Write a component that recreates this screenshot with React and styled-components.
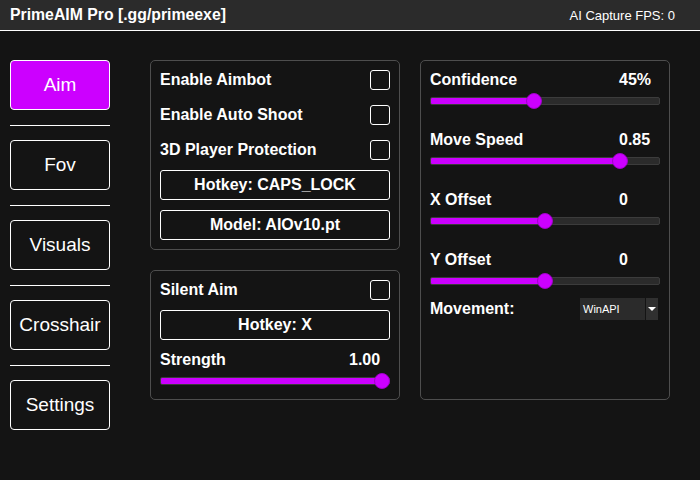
import React from "react";
import styled, { createGlobalStyle } from "styled-components";

const ACCENT = "#cc00ff";

const GlobalStyle = createGlobalStyle`
  html, body { margin: 0; padding: 0; background: #141414; }
  body { font-family: "Liberation Sans", Arial, sans-serif; color: #ffffff; }
  * { box-sizing: border-box; }
`;

const Page = styled.div`
  width: 700px;
  height: 480px;
  background: #141414;
  overflow: hidden;
`;

const Header = styled.header`
  height: 31px;
  background: #2b2b2b;
  border-bottom: 1px solid #ffffff;
  display: flex;
  align-items: center;
  justify-content: space-between;
  padding: 0 25px 0 10px;
`;

const Title = styled.div`
  font-size: 15.8px;
  font-weight: bold;
  color: #ffffff;
`;

const Fps = styled.div`
  font-size: 13px;
  color: #ffffff;
`;

const Main = styled.main`
  display: flex;
  align-items: flex-start;
  padding: 29px 0 0 10px;
`;

const Sidebar = styled.nav`
  width: 100px;
  display: flex;
  flex-direction: column;
`;

const NavButton = styled.div`
  height: 50px;
  border: 1px solid #ffffff;
  border-radius: 4px;
  background: ${(p) => (p.$active ? ACCENT : "transparent")};
  display: flex;
  align-items: center;
  justify-content: center;
  font-size: 19px;
  color: #ffffff;
`;

const Separator = styled.div`
  height: 1px;
  background: #ffffff;
  margin: 15px 0 14px;
`;

const Column = styled.div`
  width: 250px;
  margin-left: ${(p) => p.$ml}px;
  display: flex;
  flex-direction: column;
  gap: 20px;
`;

const Panel = styled.section`
  height: ${(p) => p.$h}px;
  border: 1px solid #4e4e4e;
  border-radius: 5px;
  padding: 9px;
  display: flex;
  flex-direction: column;
  gap: 10px;
`;

const CheckList = styled.div`
  display: flex;
  flex-direction: column;
  gap: 15px;
`;

const CheckRow = styled.div`
  height: 20px;
  display: flex;
  align-items: center;
  justify-content: space-between;
`;

const Label = styled.span`
  font-size: 16px;
  font-weight: bold;
  color: #ffffff;
  white-space: nowrap;
`;

const Checkbox = styled.div`
  width: 20px;
  height: 20px;
  border: 1px solid #ffffff;
  border-radius: 3px;
`;

const OutlineButton = styled.div`
  height: 30px;
  border: 1px solid #ffffff;
  border-radius: 3px;
  display: flex;
  align-items: center;
  justify-content: center;
  font-size: 16px;
  font-weight: bold;
  color: #ffffff;
`;

const SliderList = styled.div`
  display: flex;
  flex-direction: column;
  gap: 22px;
`;

const SliderGroup = styled.div`
  display: flex;
  flex-direction: column;
  gap: 4px;
`;

const LabelRow = styled.div`
  height: 20px;
  display: grid;
  grid-template-columns: 189px 1fr;
  align-items: center;
`;

const TrackArea = styled.div`
  position: relative;
  height: 14px;
  display: flex;
  align-items: center;
`;

const Track = styled.div`
  width: 100%;
  height: 8px;
  background: #2b2b2b;
  border: 1px solid #3c3c3c;
  border-radius: 2px;
  overflow: hidden;
`;

const Fill = styled.div`
  height: 100%;
  background: ${ACCENT};
`;

const Thumb = styled.div`
  position: absolute;
  top: -1px;
  width: 16px;
  height: 16px;
  border-radius: 50%;
  background: ${ACCENT};
  border: 1px solid #a000c8;
`;

const MoveRow = styled.div`
  height: 22px;
  display: flex;
  align-items: center;
  justify-content: space-between;
  padding-right: 2px;
`;

const Select = styled.div`
  width: 78px;
  height: 22px;
  display: flex;
  gap: 1px;
`;

const SelectValue = styled.div`
  flex: 1;
  background: #2b2b2b;
  font-size: 11px;
  color: #ffffff;
  display: flex;
  align-items: center;
  padding-left: 3px;
`;

const SelectArrow = styled.div`
  width: 12px;
  background: #303030;
  display: flex;
  align-items: center;
  justify-content: center;
`;

const TRACK_W = 230;
const THUMB = 16;

function Slider({ label, value, pos }) {
  const left = pos * (TRACK_W - THUMB);
  return (
    <SliderGroup>
      <LabelRow>
        <Label>{label}</Label>
        <Label>{value}</Label>
      </LabelRow>
      <TrackArea>
        <Track>
          <Fill style={{ width: `${left + THUMB / 2}px` }} />
        </Track>
        <Thumb style={{ left: `${left}px` }} />
      </TrackArea>
    </SliderGroup>
  );
}

const navItems = ["Aim", "Fov", "Visuals", "Crosshair", "Settings"];

export default function App() {
  return (
    <Page>
      <GlobalStyle />
      <Header>
        <Title>PrimeAIM Pro [.gg/primeexe]</Title>
        <Fps>AI Capture FPS: 0</Fps>
      </Header>
      <Main>
        <Sidebar>
          {navItems.map((item, i) => (
            <React.Fragment key={item}>
              {i > 0 && <Separator />}
              <NavButton $active={i === 0}>{item}</NavButton>
            </React.Fragment>
          ))}
        </Sidebar>
        <Column $ml={40}>
          <Panel $h={190}>
            <CheckList>
              <CheckRow>
                <Label>Enable Aimbot</Label>
                <Checkbox />
              </CheckRow>
              <CheckRow>
                <Label>Enable Auto Shoot</Label>
                <Checkbox />
              </CheckRow>
              <CheckRow>
                <Label>3D Player Protection</Label>
                <Checkbox />
              </CheckRow>
            </CheckList>
            <OutlineButton>Hotkey: CAPS_LOCK</OutlineButton>
            <OutlineButton>Model: AIOv10.pt</OutlineButton>
          </Panel>
          <Panel $h={130}>
            <CheckRow>
              <Label>Silent Aim</Label>
              <Checkbox />
            </CheckRow>
            <OutlineButton>Hotkey: X</OutlineButton>
            <Slider label="Strength" value="1.00" pos={1} />
          </Panel>
        </Column>
        <Column $ml={20}>
          <Panel $h={340}>
            <SliderList>
              <Slider label="Confidence" value="45%" pos={0.45} />
              <Slider label="Move Speed" value="0.85" pos={0.85} />
              <Slider label="X Offset" value="0" pos={0.5} />
              <Slider label="Y Offset" value="0" pos={0.5} />
            </SliderList>
            <MoveRow>
              <Label>Movement:</Label>
              <Select>
                <SelectValue>WinAPI</SelectValue>
                <SelectArrow>
                  <svg width="8" height="4" viewBox="0 0 8 4">
                    <path d="M0 0 L8 0 L4 4 Z" fill="#ffffff" />
                  </svg>
                </SelectArrow>
              </Select>
            </MoveRow>
          </Panel>
        </Column>
      </Main>
    </Page>
  );
}
